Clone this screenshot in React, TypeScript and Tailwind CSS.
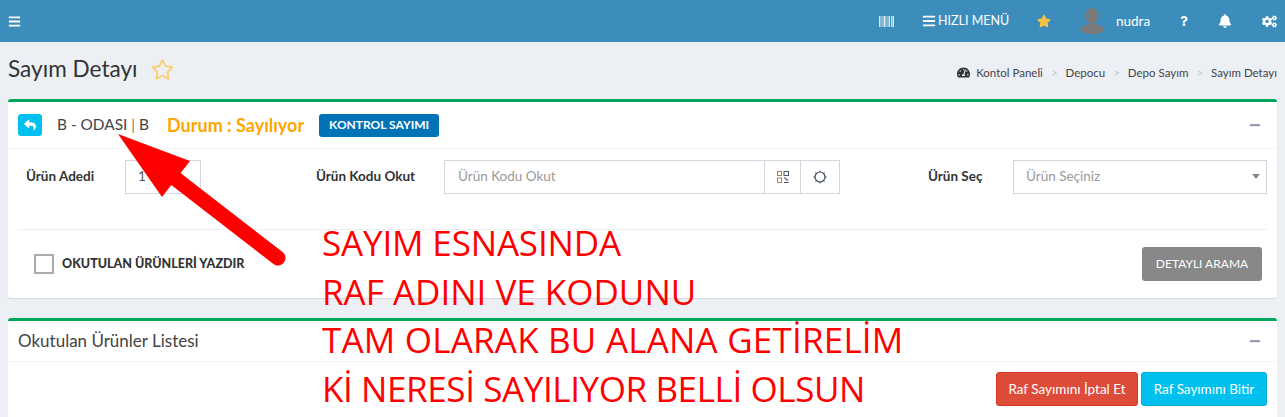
import React from 'react';
import { FaBars, FaBell, FaCogs, FaMinus, FaQuestion, FaRegStar, FaReply, FaStar, FaTachometerAlt } from 'react-icons/fa';

const Barcode = () => (
  <svg width="15" height="11" viewBox="0 0 15 11" className="text-white" fill="currentColor">
    <rect x="0" width="1.5" height="11" opacity="0.8" />
    <rect x="2.5" width="1" height="11" opacity="0.7" />
    <rect x="4.5" width="2" height="11" opacity="0.85" />
    <rect x="7.5" width="1" height="11" opacity="0.7" />
    <rect x="9.5" width="1.5" height="11" opacity="0.8" />
    <rect x="12" width="1" height="11" opacity="0.7" />
    <rect x="13.5" width="1.5" height="11" opacity="0.85" />
  </svg>
);

const Avatar = () => (
  <svg width="24" height="26" viewBox="0 0 24 26" fill="#7b7b7b">
    <ellipse cx="12" cy="8" rx="6.5" ry="8" />
    <path d="M0 22c0-3 5-5 8.500-6h7c3.500 1 8.500 3 8.500 6 0 2-5 4-12 4S0 24 0 22z" />
  </svg>
);

const QrIcon = () => (
  <svg width="12" height="12" viewBox="0 0 12 12" fill="none" stroke="#44546f" strokeWidth="1">
    <rect x="0.500" y="0.500" width="4" height="4" stroke="#b5803a" />
    <rect x="7" y="0.500" width="4.500" height="4" />
    <rect x="0.500" y="7" width="4" height="4.500" stroke="#b5803a" />
    <path d="M7 7h2v2h2.500M7 11.500h4.500" />
  </svg>
);

const GearIcon = () => (
  <svg width="14" height="14" viewBox="0 0 14 14" fill="none" stroke="#3f4a5a" strokeWidth="1.200">
    <circle cx="7" cy="7" r="5" />
    <path d="M7 0.500v1.500M7 12v1.500M0.500 7H2M12 7h1.500M2.400 2.400l1 1M10.600 10.600l1 1M2.400 11.600l1-1M10.600 3.400l1-1" strokeWidth="1" />
  </svg>
);

function BreadcrumbSep() {
  return <span className="text-[#c4c8cc]">&gt;</span>;
}

export default function App() {
  return (
    <div className="relative h-[417px] w-[1285px] overflow-hidden bg-[#ecf0f5] font-['Lato',sans-serif] text-[#333]">
      <header className="flex h-[42px] items-center bg-[#3c8dbc] pr-[8px] pl-2 text-white">
        <FaBars className="text-[13px]" />
        <div className="ml-auto flex items-center">
          <Barcode />
          <div className="ml-[28px] flex w-[84px] items-center gap-[2px] text-[12.500px] whitespace-nowrap">
            <FaBars className="shrink-0 text-[14px]" />
            <span>HIZLI MENÜ</span>
          </div>
          <FaStar className="ml-[31px] text-[14px] text-[#f6c244]" />
          <div className="ml-[29px]">
            <Avatar />
          </div>
          <span className="ml-[12px] w-[34px] text-[13.500px]">nudra</span>
          <FaQuestion className="ml-[29px] text-[10px]" />
          <FaBell className="ml-[29px] text-[14px]" />
          <FaCogs className="ml-[30px] text-[15px]" />
        </div>
      </header>

      <div className="flex h-[57px] items-center px-2">
        <h1 className="pb-[2px] text-[22.600px] leading-none font-normal text-[#333]">Sayım Detayı</h1>
        <FaRegStar className="mb-[2px] ml-[13px] text-[23px] text-[#f9cf70]" />
        <nav className="ml-auto flex items-center gap-[8px] pt-[4px] text-[11.500px] text-[#444]">
          <FaTachometerAlt className="mr-[-2px] text-[13px] text-[#333]" />
          <span>Kontol Paneli</span>
          <BreadcrumbSep />
          <span>Depocu</span>
          <BreadcrumbSep />
          <span>Depo Sayım</span>
          <BreadcrumbSep />
          <span>Sayım Detayı</span>
        </nav>
      </div>

      <section className="mx-2 h-[199px] rounded-[3px] border-t-[3px] border-[#00a65a] bg-white shadow-[0_1px_1px_rgba(0,0,0,0.1)]">
        <div className="flex h-[47px] items-center border-b border-[#f4f4f4] pr-4 pl-[10px]">
          <button className="flex h-[22px] w-6 items-center justify-center rounded-[3px] bg-[#00c0ef] text-white">
            <FaReply className="text-[12px]" />
          </button>
          <span className="ml-[15px] text-[15.400px] text-[#444]">
            B - ODASI <span className="text-[#a9705a]">|</span> B
          </span>
          <span className="ml-[18px] text-[18px] font-bold text-[#ffa500]">Durum : Sayılıyor</span>
          <span className="ml-[15px] flex h-[23px] w-[120px] items-center justify-center rounded-[3px] bg-[#0073b7] text-[12px] font-bold text-white">
            KONTROL SAYIMI
          </span>
          <FaMinus className="ml-auto text-[12px] text-[#97a0b3]" />
        </div>

        <div className="flex h-[80px] items-start pt-[11px] pr-[10px]">
          <label className="ml-[18px] flex h-[34px] w-[99px] items-center pb-px text-[13.500px] font-bold text-[#333]">Ürün Adedi</label>
          <div className="flex h-[34px] w-[76px] items-center border border-[#d2d6de] px-3 pb-px text-[13.500px] text-[#555]">1</div>
          <label className="ml-[115px] flex h-[34px] w-[128px] items-center pb-px text-[13.500px] font-bold text-[#333]">Ürün Kodu Okut</label>
          <div className="flex h-[34px] w-[396px]">
            <div className="flex w-[321px] items-center border border-[#d2d6de] pr-3 pb-px pl-[13px] text-[13.500px] text-[#999]">Ürün Kodu Okut</div>
            <div className="flex w-[36px] items-center justify-center border-y border-r border-[#d2d6de]">
              <QrIcon />
            </div>
            <div className="flex w-[39px] items-center justify-center border-y border-r border-[#d2d6de]">
              <GearIcon />
            </div>
          </div>
          <label className="ml-[88px] flex h-[34px] w-[85px] items-center pb-px text-[13.500px] font-bold text-[#333]">Ürün Seç</label>
          <div className="flex h-[34px] flex-1 items-center justify-between border border-[#d2d6de] pr-[6px] pb-px pl-3 text-[13.500px] text-[#999]">
            <span>Ürün Seçiniz</span>
            <span className="h-0 w-0 border-x-[4px] border-t-[5px] border-x-transparent border-t-[#888]" />
          </div>
        </div>

        <div className="mx-[10px] flex h-[69px] items-center justify-between border-t border-[#eee] pr-[5px] pl-4">
          <div className="flex items-center gap-2">
            <span className="h-5 w-5 border-2 border-[#aaa] bg-white" />
            <span className="text-[12.500px] font-black text-[#333]">OKUTULAN ÜRÜNLERİ YAZDIR</span>
          </div>
          <button className="flex h-[34px] w-[120px] items-center justify-center rounded-[3px] bg-[#888] text-[12px] text-white">
            DETAYLI ARAMA
          </button>
        </div>
      </section>

      <section className="mx-2 mt-5 h-[200px] rounded-[3px] border-t-[3px] border-[#00a65a] bg-white">
        <div className="flex h-[41px] items-center justify-between border-b border-[#f4f4f4] pr-4 pl-[10px]">
          <span className="text-[17px] text-[#444]">Okutulan Ürünler Listesi</span>
          <FaMinus className="text-[12px] text-[#97a0b3]" />
        </div>
        <div className="flex justify-end gap-[3px] pt-[10px] pr-[10px]">
          <button className="flex h-[34px] w-[142px] items-center justify-center rounded-[3px] border border-[#d73925] bg-[#dd4b39] text-[13.500px] text-white">
            Raf Sayımını İptal Et
          </button>
          <button className="flex h-[34px] w-[126px] items-center justify-center rounded-[3px] border border-[#00acd6] bg-[#00c0ef] text-[13.500px] text-white">
            Raf Sayımını Bitir
          </button>
        </div>
      </section>

      {/* kirmizi ok ve not, ekran goruntusunun ustune eklenmis */}
      <svg className="pointer-events-none absolute top-0 left-0" width="1285" height="417" viewBox="0 0 1285 417">
        <polygon points="118,134 190,161 162,197" fill="#ff0000" />
        <line x1="172" y1="176" x2="278" y2="258" stroke="#ff0000" strokeWidth="15" strokeLinecap="round" />
      </svg>
      <div className="absolute top-[219px] left-[322px] font-['Open_Sans',sans-serif] text-[35px] leading-[48.500px] text-[#ff0000]">
        <div className="tracking-[-0.15px]">SAYIM ESNASINDA</div>
        <div>RAF ADINI VE KODUNU</div>
        <div className="tracking-[0.2px]">TAM OLARAK BU ALANA GETİRELİM</div>
        <div className="tracking-[-0.4px]">Kİ NERESİ SAYILIYOR BELLİ OLSUN</div>
      </div>
    </div>
  );
}
